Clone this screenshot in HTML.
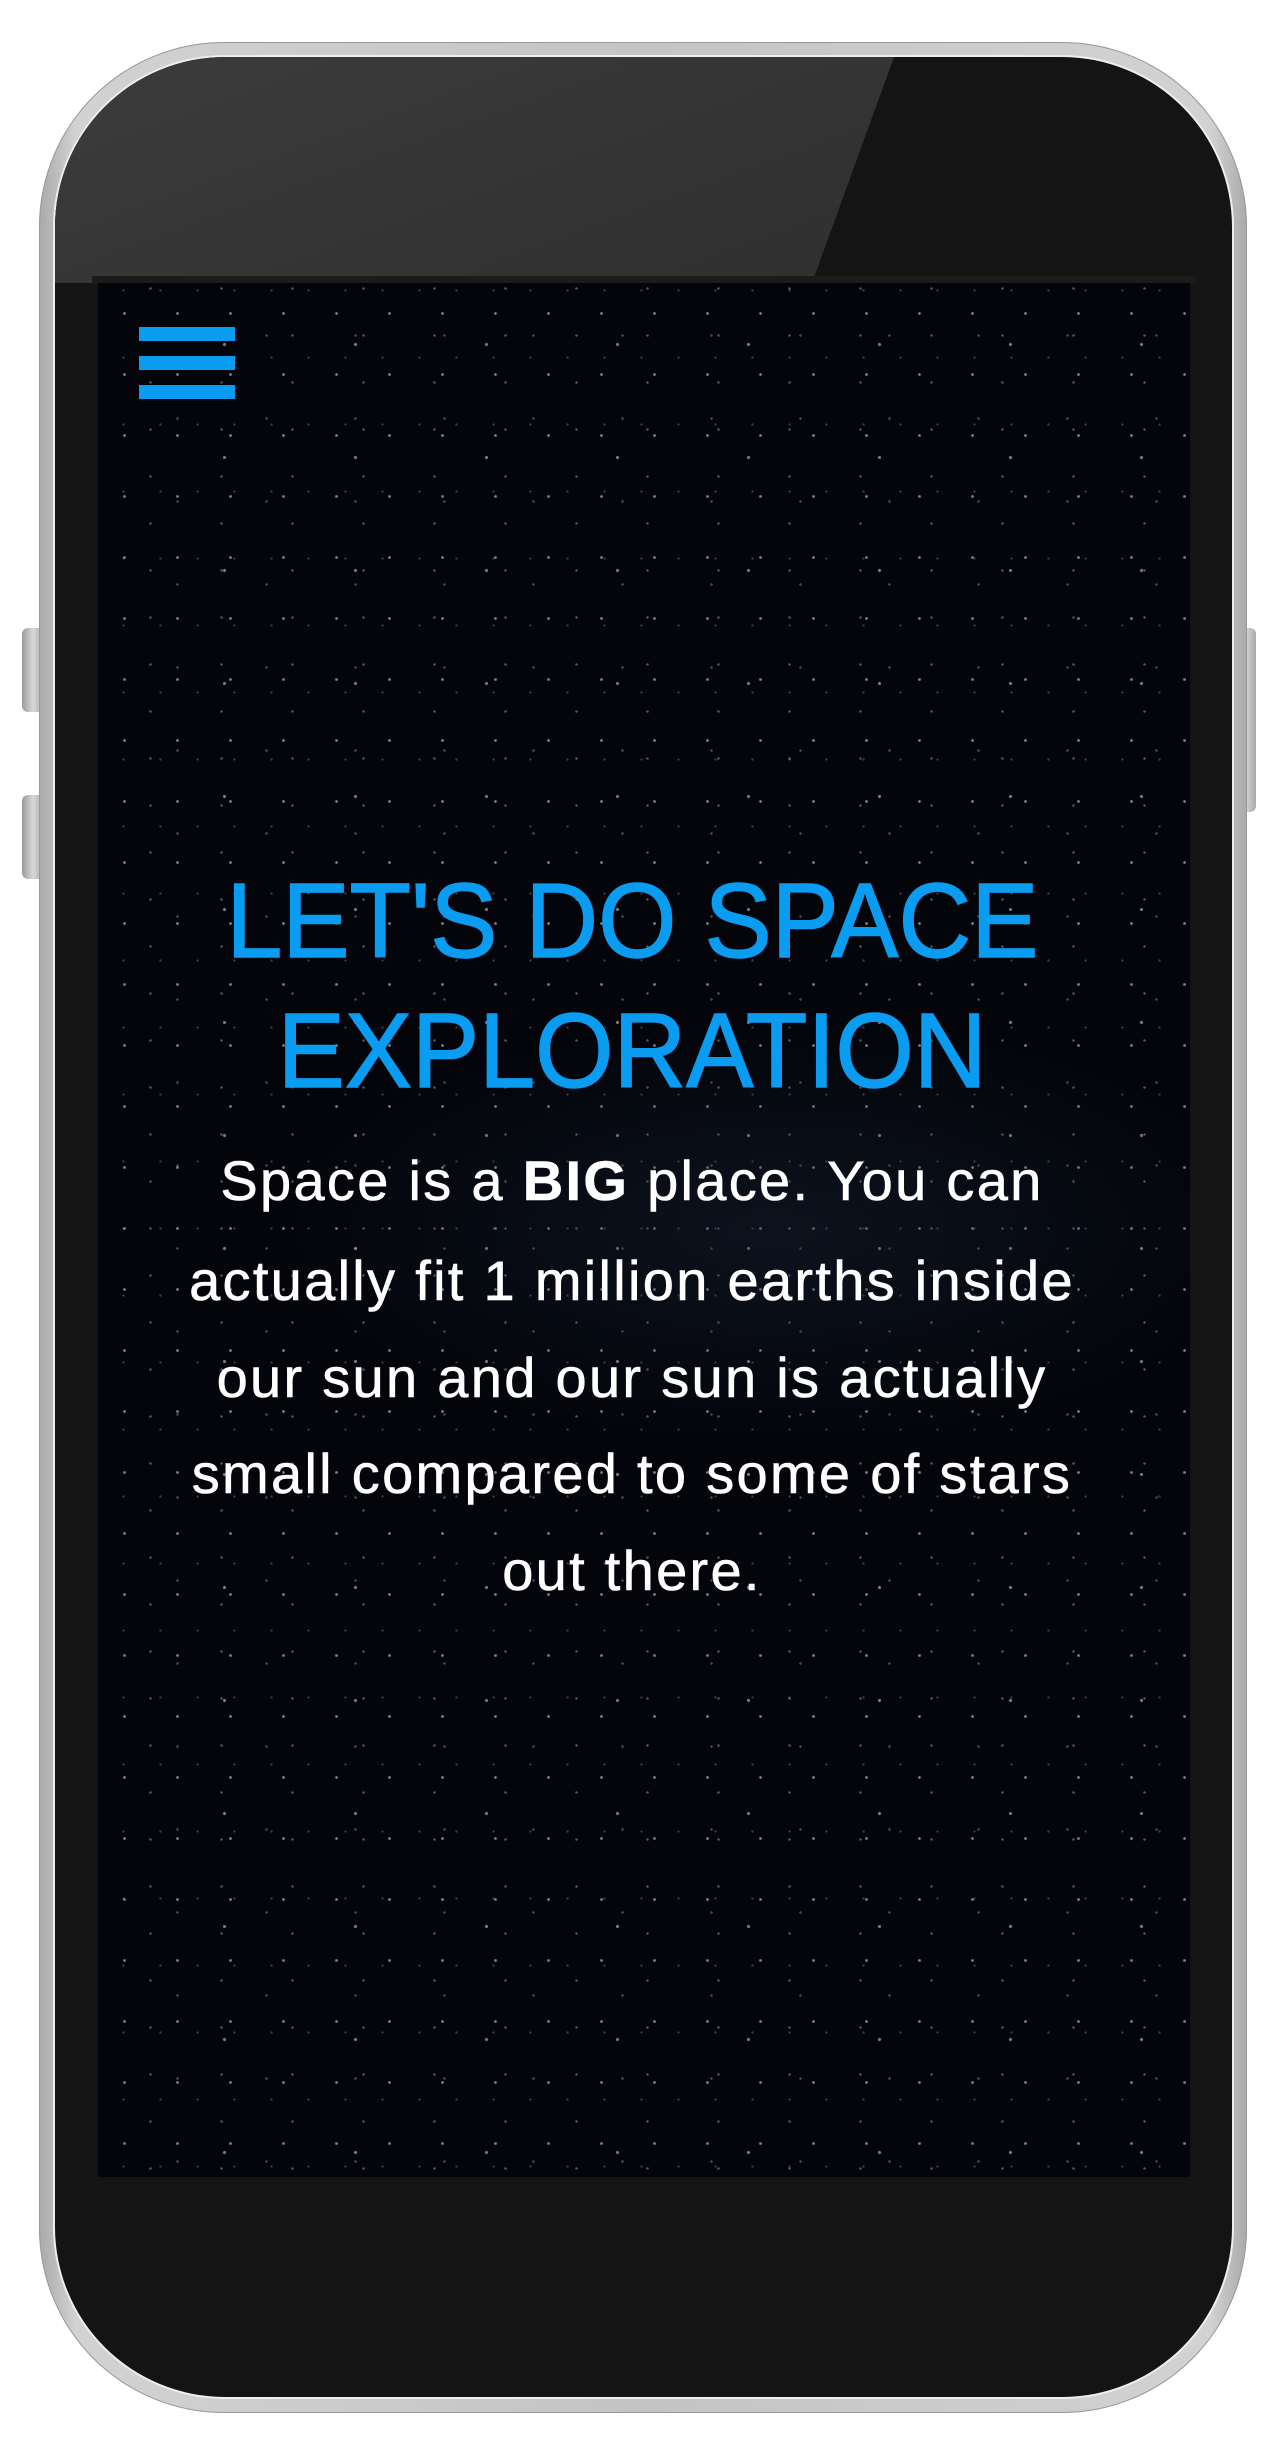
<!DOCTYPE html>
<html><head><meta charset="utf-8">
<style>
html,body{margin:0;padding:0;background:#fff;}
body{width:1280px;height:2453px;position:relative;overflow:hidden;font-family:"Liberation Sans",sans-serif;}
.abs{position:absolute;}
.outer{left:39px;top:42px;width:1208px;height:2371px;border-radius:185px;background:linear-gradient(90deg,#a9a9a9,#d2d2d2 3%,#c4c4c4 50%,#d2d2d2 97%,#a9a9a9);box-shadow:inset 0 0 0 1px #999;}
.inner{left:55px;top:57px;width:1177px;height:2340px;border-radius:170px;background:#141414;overflow:hidden;box-shadow:0 0 0 2px #eee;}
.glare{left:0;top:0;width:1177px;height:226px;background:linear-gradient(160deg,#3c3c3c,#323232 60%,#2e2e2e);clip-path:polygon(0 0,839px 0,757px 226px,0 226px);}
.scrborder{left:92px;top:276px;width:1104px;height:8px;background:#1b1b1b;}
.screen{left:98px;top:283px;width:1092px;height:1894px;background:
radial-gradient(ellipse 700px 300px at 62% 50%,rgba(30,42,66,.35),transparent 70%),
radial-gradient(circle,rgba(220,225,240,.55) 0 1.1px,transparent 1.7px) 0 0/53px 61px,
radial-gradient(circle,rgba(200,210,230,.4) 0 1px,transparent 1.5px) 17px 29px/71px 47px,
radial-gradient(circle,rgba(200,210,230,.35) 0 1px,transparent 1.5px) 35px 11px/89px 83px,
radial-gradient(circle,rgba(180,190,220,.3) 0 .9px,transparent 1.4px) 7px 41px/37px 67px,
radial-gradient(circle,rgba(230,235,250,.5) 0 1.3px,transparent 1.9px) 61px 5px/131px 113px,
#03050a;}
.bar{left:139px;width:96px;height:14px;background:#0a9cf0;}
.h{left:0;width:1264px;text-align:center;color:#0a9cf0;font-size:106px;line-height:106px;white-space:nowrap;-webkit-text-stroke:1.5px #0a9cf0;}
.h span{display:inline-block;transform:scaleX(.95);}
.p{left:0;width:1264px;text-align:center;color:#fff;font-size:56px;line-height:56px;letter-spacing:2.3px;white-space:nowrap;-webkit-text-stroke:.6px #fff;}
.btn{background:linear-gradient(90deg,#9a9a9a,#d8d8d8,#a8a8a8);border-radius:6px;}
</style></head><body>
<div class="abs btn" style="left:22px;top:628px;width:22px;height:84px;"></div>
<div class="abs btn" style="left:22px;top:795px;width:22px;height:84px;"></div>
<div class="abs btn" style="left:1234px;top:628px;width:22px;height:184px;"></div>
<div class="abs outer"></div>
<div class="abs inner"><div class="abs glare"></div></div>
<div class="abs scrborder"></div>
<div class="abs screen"></div>
<div class="abs bar" style="top:327px"></div>
<div class="abs bar" style="top:356px"></div>
<div class="abs bar" style="top:385px"></div>
<div class="abs h" style="top:868px"><span>LET'S DO SPACE</span></div>
<div class="abs h" style="top:998px"><span>EXPLORATION</span></div>
<div class="abs p" style="top:1153px">Space is a <b>BIG</b> place. You can</div>
<div class="abs p" style="top:1253px">actually fit 1 million earths inside</div>
<div class="abs p" style="top:1350px">our sun and our sun is actually</div>
<div class="abs p" style="top:1446px">small compared to some of stars</div>
<div class="abs p" style="top:1543px">out there.</div>
</body></html>
